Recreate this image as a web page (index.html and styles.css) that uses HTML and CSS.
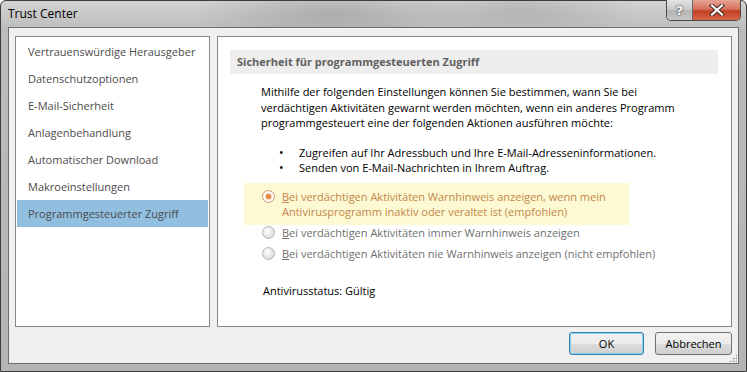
FILE: index.html
```html
<!DOCTYPE html>
<html lang="de">
<head>
    <meta charset="UTF-8">
    <meta name="viewport" content="width=device-width, initial-scale=1.0">
    <title>Trust Center</title>
    <link rel="stylesheet" href="styles.css">
</head>
<body>

    <div class="window">
        <div class="titlebar">
            <div class="title">Trust Center</div>
            <div class="caption-buttons">
                <div class="cap-btn help">?</div>
                <div class="cap-btn close">
                    <svg width="16" height="12" viewBox="0 0 16 12">
                        <path d="M3 1.5 L13 10.5 M13 1.5 L3 10.5" stroke="#4a2a22" stroke-width="4.2" stroke-linecap="square"/>
                        <path d="M3 1.5 L13 10.5 M13 1.5 L3 10.5" stroke="#ffffff" stroke-width="2.2" stroke-linecap="square"/>
                    </svg>
                </div>
            </div>
        </div>

        <div class="client">
            <div class="panes">
                <ul class="nav">
                    <li class="nav-item">Vertrauenswürdige Herausgeber</li>
                    <li class="nav-item">Datenschutzoptionen</li>
                    <li class="nav-item">E-Mail-Sicherheit</li>
                    <li class="nav-item">Anlagenbehandlung</li>
                    <li class="nav-item">Automatischer Download</li>
                    <li class="nav-item">Makroeinstellungen</li>
                    <li class="nav-item active">Programmgesteuerter Zugriff</li>
                </ul>

                <div class="content">
                    <div class="section-header">Sicherheit für programmgesteuerten Zugriff</div>

                    <p class="intro">
                        Mithilfe der folgenden Einstellungen können Sie bestimmen, wann Sie bei<br>
                        verdächtigen Aktivitäten gewarnt werden möchten, wenn ein anderes Programm<br>
                        programmgesteuert eine der folgenden Aktionen ausführen möchte:
                    </p>

                    <ul class="actions">
                        <li>Zugreifen auf Ihr Adressbuch und Ihre E-Mail-Adresseninformationen.</li>
                        <li>Senden von E-Mail-Nachrichten in Ihrem Auftrag.</li>
                    </ul>

                    <div class="options">
                        <div class="option selected">
                            <span class="radio checked"></span>
                            <span class="option-text"><u>B</u>ei verdächtigen Aktivitäten Warnhinweis anzeigen, wenn mein<br>Antivirusprogramm inaktiv oder veraltet ist (empfohlen)</span>
                        </div>
                        <div class="option">
                            <span class="radio"></span>
                            <span class="option-text"><u>B</u>ei verdächtigen Aktivitäten immer Warnhinweis anzeigen</span>
                        </div>
                        <div class="option">
                            <span class="radio"></span>
                            <span class="option-text"><u>B</u>ei verdächtigen Aktivitäten nie Warnhinweis anzeigen (nicht empfohlen)</span>
                        </div>
                    </div>

                    <div class="status">Antivirusstatus: Gültig</div>
                </div>
            </div>

            <div class="buttons">
                <button class="btn default">OK</button>
                <button class="btn">Abbrechen</button>
            </div>
            <div class="grip"></div>
        </div>
    </div>

</body>
</html>
```

FILE: styles.css
```css
* {
    box-sizing: border-box;
}

body {
    margin: 0;
    width: 747px;
    height: 372px;
    overflow: hidden;
    font-family: "Open Sans", "Noto Sans", sans-serif;
    font-size: 11px;
    background: #ffffff;
}

/* window frame (aero glass, greyed) */
.window {
    width: 747px;
    height: 372px;
    display: flex;
    flex-direction: column;
    padding: 0 7px 7px 7px;
    border: 1px solid #3c3c3c;
    border-radius: 6px 6px 0 0;
    background:
        radial-gradient(ellipse 140px 30px at 330px 12px, rgba(120, 120, 120, 0.35), transparent),
        radial-gradient(ellipse 120px 26px at 520px 10px, rgba(130, 130, 130, 0.3), transparent),
        linear-gradient(to bottom, #d2d2d2, #bcbcbc 30px, #b4b4b4 100%);
}

.titlebar {
    height: 27px;
    display: flex;
    justify-content: space-between;
    align-items: flex-start;
    margin-right: -2px;
}

.title {
    padding-top: 4px;
    font-size: 12px;
    color: #000000;
}

.caption-buttons {
    display: flex;
    margin-top: -1px;
    border: 1px solid #4a4a4a;
    border-top: none;
    border-radius: 0 0 5px 5px;
    overflow: hidden;
}

.cap-btn {
    height: 20px;
    display: flex;
    justify-content: center;
    align-items: center;
}

.help {
    width: 26px;
    border-right: 1px solid #6a6a6a;
    background: linear-gradient(to bottom, #e2e2e2, #c9c9c9 50%, #b3b3b3 51%, #c6c6c6);
    font-family: "DejaVu Sans", sans-serif;
    font-weight: bold;
    font-size: 13px;
    color: #ffffff;
    text-shadow: 0 0 2px #333, 0 0 1px #333;
}

.close {
    width: 47px;
    background: linear-gradient(to bottom, #e7a394, #d5735d 45%, #c13f22 55%, #d8664a);
}

/* client area */
.client {
    position: relative;
    flex: 1;
    display: flex;
    flex-direction: column;
    padding: 8px 6px 8px 6px;
    border: 1px solid #6e6e6e;
    background: #f0f0f0;
}

.panes {
    height: 291px;
    display: flex;
    gap: 7px;
}

.nav {
    width: 195px;
    margin: 0;
    padding: 1px 1px 0 1px;
    list-style: none;
    border: 1px solid #828790;
    background: #ffffff;
}

.nav-item {
    height: 27px;
    line-height: 27px;
    padding-left: 11px;
    color: #4c4c4c;
    white-space: nowrap;
}

.nav-item.active {
    background: #91bfe0;
}

.content {
    flex: 1;
    border: 1px solid #828790;
    background: #ffffff;
    padding: 13px 13px 0 12px;
    line-height: 15px;
}

.section-header {
    height: 24px;
    line-height: 24px;
    padding-left: 7px;
    background: #eeeeee;
    color: #606060;
    font-weight: bold;
}

.intro {
    margin: 10px 0 0 31px;
    line-height: 15.5px;
    color: #000000;
}

.actions {
    margin: 14px 0 0 0;
    padding-left: 49px;
    list-style: none;
    color: #000000;
}

.actions li::before {
    content: "•";
    display: inline-block;
    width: 20px;
    font-size: 12px;
}

.options {
    margin-top: 8px;
    margin-left: 14px;
}

.option {
    display: flex;
    align-items: flex-start;
    gap: 7px;
    padding-left: 18px;
    margin-bottom: 6px;
    color: #6f6f6f;
}

.option.selected {
    width: 385px;
    padding-top: 6px;
    padding-bottom: 6px;
    margin-bottom: 0;
    background: #fcf9d3;
    color: #c4864a;
}

.radio {
    flex: none;
    width: 13px;
    height: 13px;
    margin-top: 1px;
    border-radius: 50%;
    border: 1px solid #b4b4b4;
    background: radial-gradient(circle at 40% 35%, #ffffff, #e4e4e4 60%, #d2d2d2);
}

.radio.checked {
    border-color: #d59c6a;
    background:
        radial-gradient(circle, #e08a4a 0, #e08a4a 2px, #f7d2b2 3px, #ffffff 4px, #f2dcc8 100%);
}

.status {
    margin: 22px 0 0 33px;
    color: #000000;
}

/* bottom buttons */
.buttons {
    margin-top: 5px;
    display: flex;
    justify-content: flex-end;
    gap: 11px;
}

.btn {
    height: 23px;
    padding: 0;
    font-family: "Open Sans", sans-serif;
    font-size: 11px;
    color: #000000;
    border: 1px solid #707070;
    border-radius: 3px;
    background: linear-gradient(to bottom, #f2f2f2, #ebebeb 50%, #dddddd 51%, #cfcfcf);
}

.btn.default {
    width: 75px;
    border-color: #3c7fb1;
    box-shadow: inset 0 0 0 1px #7fd0f5;
}

.btn:not(.default) {
    width: 77px;
}

.grip {
    position: absolute;
    right: 1px;
    bottom: 1px;
    width: 8px;
    height: 8px;
    background: radial-gradient(circle, #a0a0a0 0.8px, transparent 1.2px) 0 0 / 3px 3px;
    clip-path: polygon(100% 0, 100% 100%, 0 100%);
}
```
